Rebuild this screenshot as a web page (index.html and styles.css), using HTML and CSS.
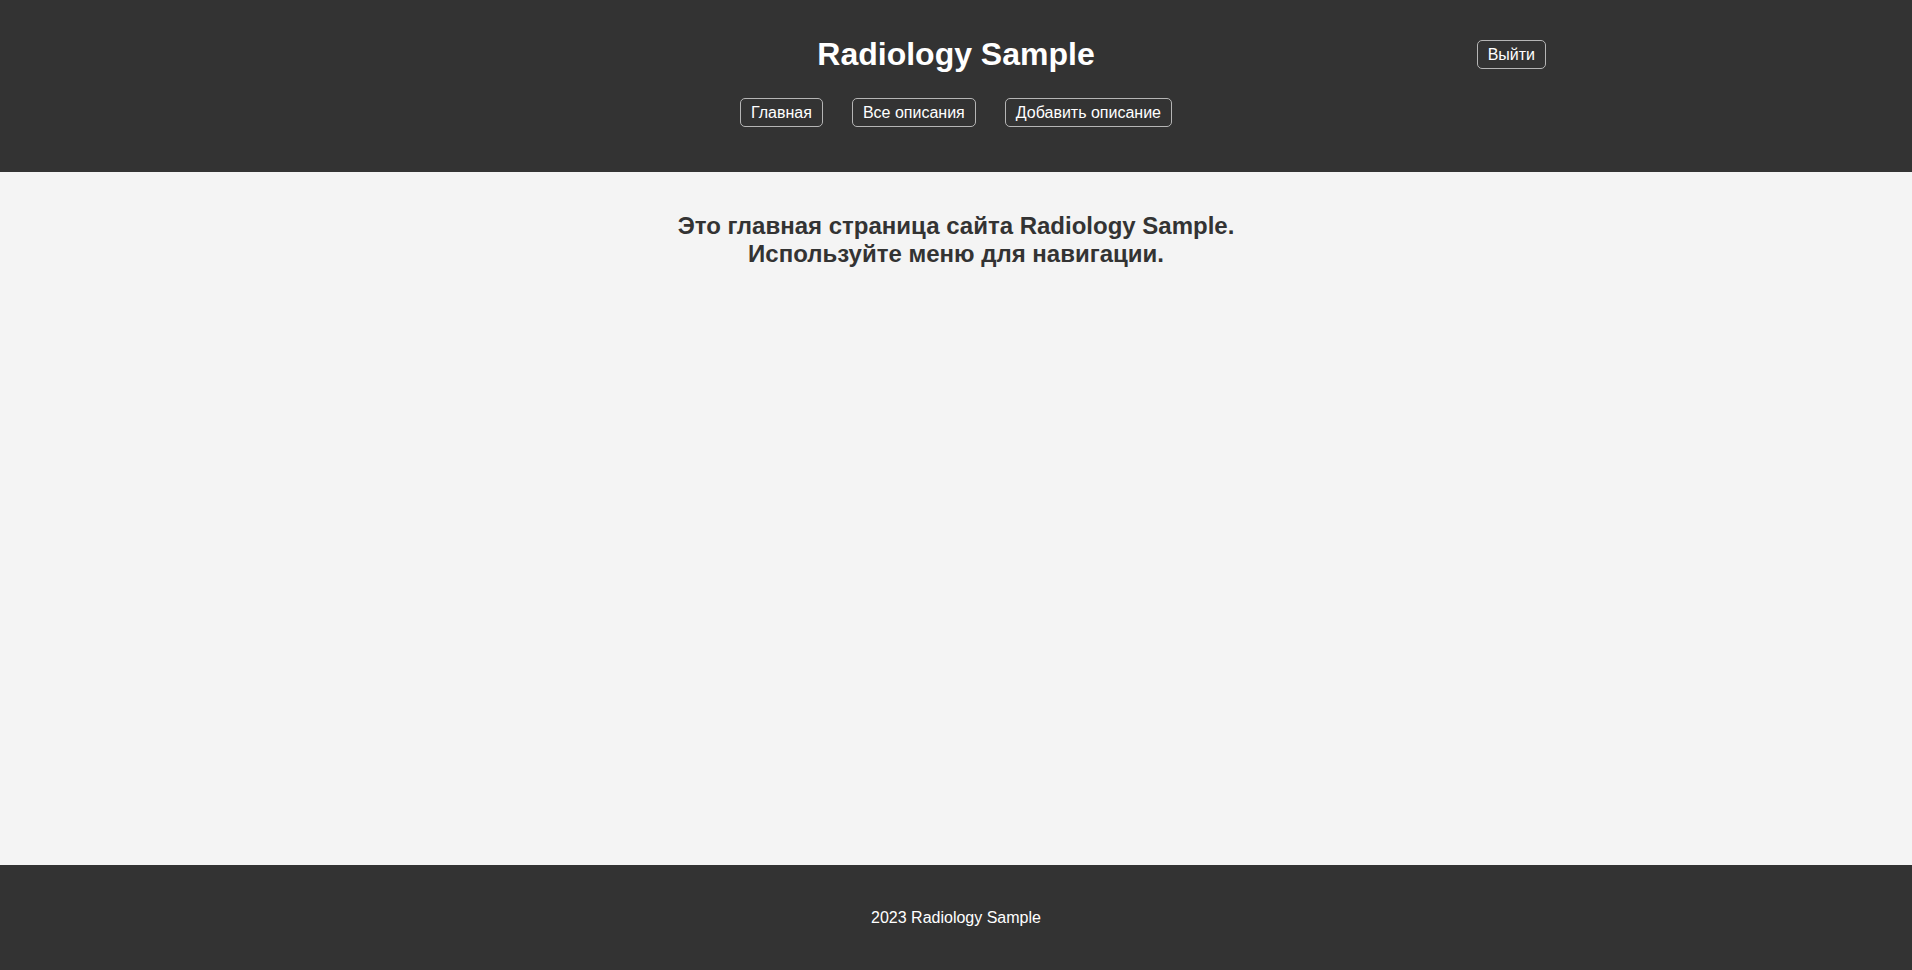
FILE: index.html
```html
<!DOCTYPE html>
<html lang="ru">
<head>
<meta charset="utf-8">
<title>Radiology Sample</title>
<link rel="stylesheet" href="styles.css">
</head>
<body>
<header class="site-header">
  <div class="header-inner">
    <div class="title-row">
      <span class="spacer"></span>
      <h1 class="site-title">Radiology Sample</h1>
      <a class="btn btn-logout" href="#">Выйти</a>
    </div>
    <nav class="main-nav">
      <a class="btn" href="#">Главная</a>
      <a class="btn" href="#">Все описания</a>
      <a class="btn" href="#">Добавить описание</a>
    </nav>
  </div>
</header>
<main class="content">
  <h2 class="welcome">Это главная страница сайта Radiology Sample.<br>Используйте меню для навигации.</h2>
</main>
<footer class="site-footer">
  <p class="copyright">2023 Radiology Sample</p>
</footer>
</body>
</html>
```

FILE: styles.css
```css
html, body {
  margin: 0;
  padding: 0;
}

body {
  font-family: "Liberation Sans", Arial, sans-serif;
  background: #f4f4f4;
  color: #333;
  min-height: 100vh;
  display: flex;
  flex-direction: column;
}

.site-header {
  background: #333;
  color: #fff;
  height: 172px;
  box-sizing: border-box;
  padding-top: 36px;
}

.header-inner {
  max-width: 1180px;
  margin: 0 auto;
  display: flex;
  flex-direction: column;
  align-items: stretch;
}

.title-row {
  display: grid;
  grid-template-columns: 1fr auto 1fr;
  align-items: center;
}

.site-title {
  margin: 0;
  font-size: 32px;
  line-height: 37px;
  font-weight: bold;
  text-align: center;
}

.btn {
  display: inline-block;
  color: #fff;
  text-decoration: none;
  font-size: 16px;
  line-height: 17px;
  padding: 5px 10px;
  border: 1px solid #b5b5b5;
  border-radius: 5px;
}

.btn-logout {
  justify-self: end;
}

.main-nav {
  display: flex;
  justify-content: center;
  gap: 29px;
  margin-top: 25px;
}

.content {
  flex: 1;
  padding: 20px;
  text-align: center;
}

.welcome {
  margin: 20px 0;
  font-size: 24px;
  line-height: 28px;
  font-weight: bold;
  color: #333;
}

.site-footer {
  background: #333;
  color: #fff;
  height: 105px;
  display: flex;
  align-items: center;
  justify-content: center;
}

.copyright {
  margin: 0;
  font-size: 16px;
  line-height: 18px;
}
```
